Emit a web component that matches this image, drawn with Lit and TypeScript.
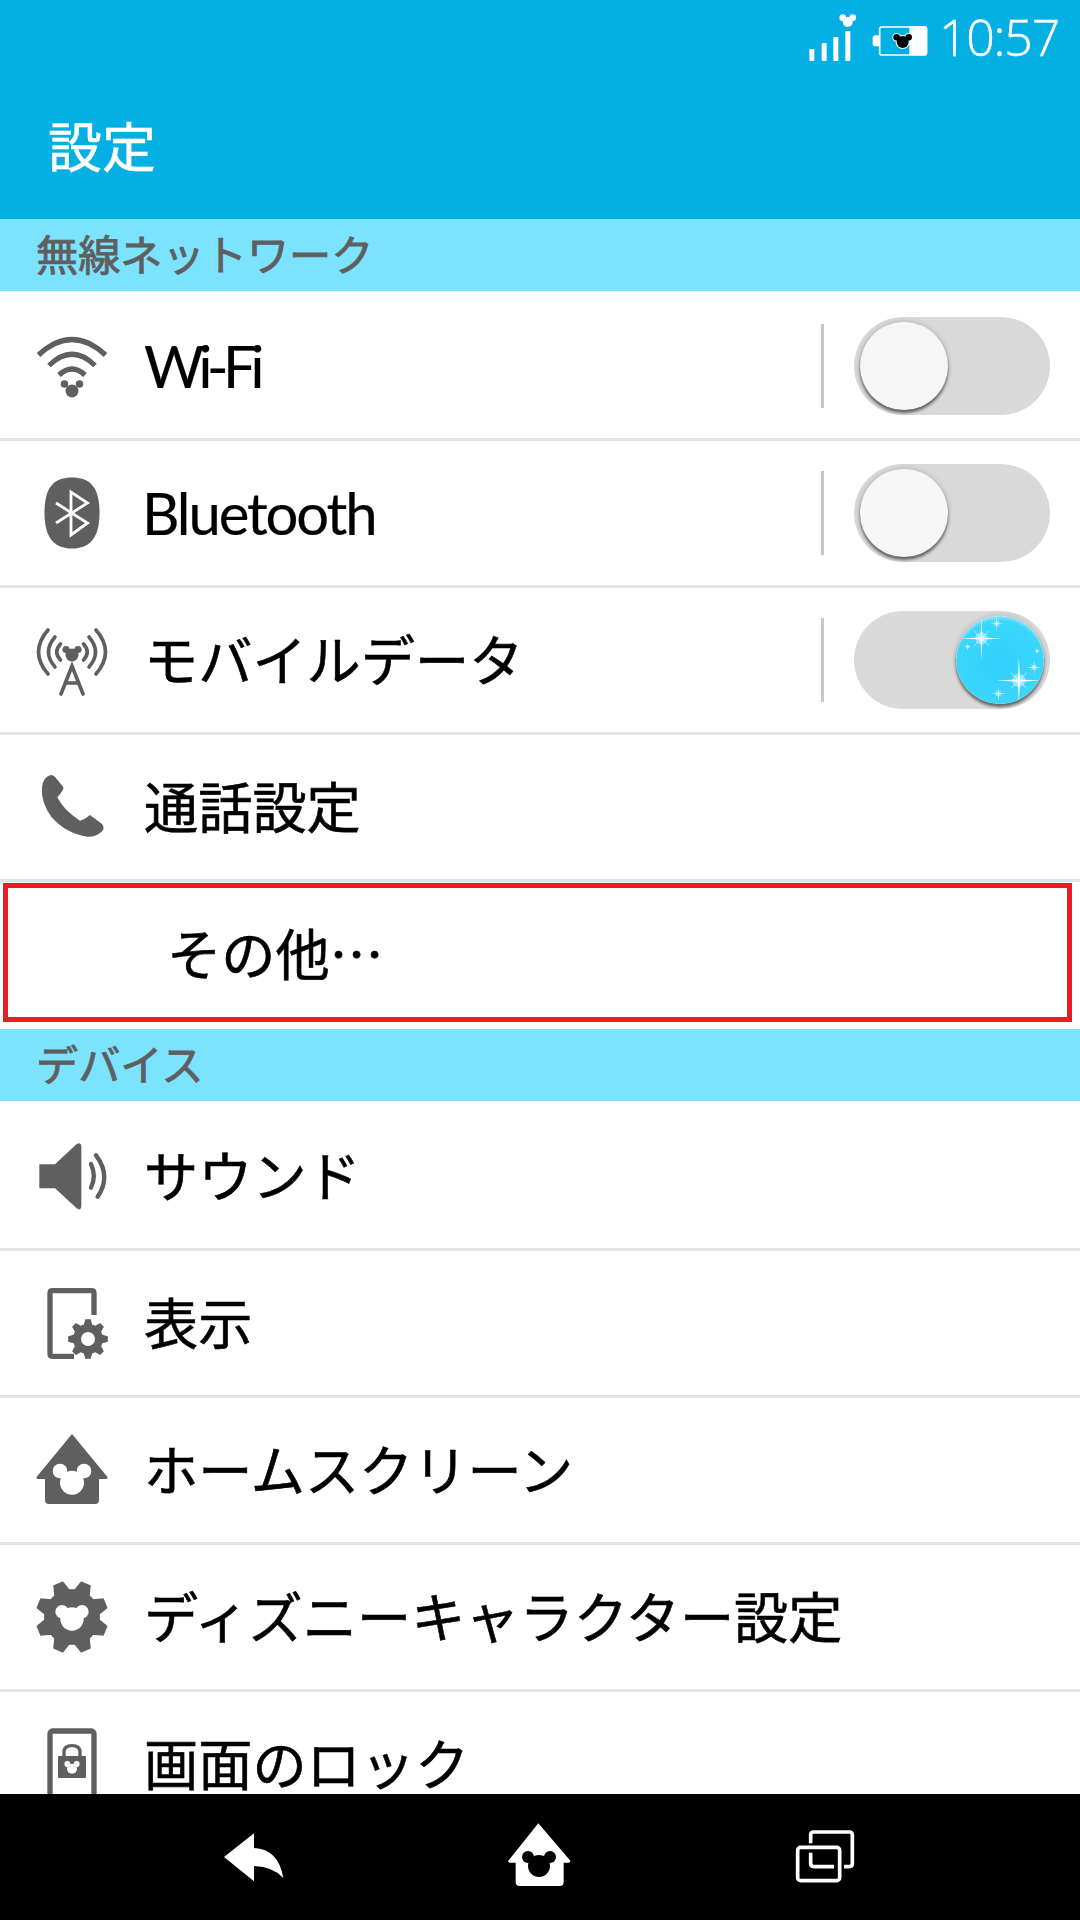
import { LitElement, html, css, svg } from "lit";
import { customElement } from "lit/decorators.js";

const GREY = "#5f5f5f";

function mickey(cx: number, cy: number, r: number, er: number, ex: number, ey: number, fill: string) {
  return svg`<circle cx=${cx} cy=${cy} r=${r} fill=${fill}/><circle cx=${cx - ex} cy=${cy - ey} r=${er} fill=${fill}/><circle cx=${cx + ex} cy=${cy - ey} r=${er} fill=${fill}/>`;
}

function gear(cx: number, cy: number, ro: number, ri: number, teeth: number, offset: number) {
  const step = (Math.PI * 2) / teeth;
  const pts: string[] = [];
  for (let i = 0; i < teeth; i++) {
    const a = offset + i * step - Math.PI / 2;
    const p = (rad: number, d: number) => `${(cx + rad * Math.cos(a + d)).toFixed(1)},${(cy + rad * Math.sin(a + d)).toFixed(1)}`;
    pts.push(p(ri, -step * 0.36), p(ro, -step * 0.17), p(ro, step * 0.17), p(ri, step * 0.36));
  }
  return pts.join(" ");
}

function star(x: number, y: number, arm: number) {
  const w = Math.max(1.4, arm * 0.05);
  const d = arm * 0.36;
  return svg`
    <circle cx=${x} cy=${y} r=${arm * 0.3} fill="#fff" opacity=".4"/>
    <polygon fill="#fff" points="${x - arm},${y} ${x - w},${y - w} ${x},${y - arm} ${x + w},${y - w} ${x + arm},${y} ${x + w},${y + w} ${x},${y + arm} ${x - w},${y + w}"/>
    <line x1=${x - d} y1=${y - d} x2=${x + d} y2=${y + d} stroke="#fff" stroke-width="1.8"/>
    <line x1=${x - d} y1=${y + d} x2=${x + d} y2=${y - d} stroke="#fff" stroke-width="1.8"/>`;
}

const wrap = (vb: string, body: unknown) => html`<svg class="icon" viewBox=${vb}>${body}</svg>`;

const icons: Record<string, unknown> = {
  wifi: wrap("0 0 72 72", svg`
    <g fill="none" stroke=${GREY} stroke-width="5.2">
      <path d="M2.5 25 Q36 -6 69.5 25"/>
      <path d="M13 35.5 Q36 13 59 35.5"/>
      <path d="M23 45 Q36 33 49 45"/>
    </g>${mickey(36, 61, 6.5, 3.8, 7.5, 7, GREY)}`),
  bluetooth: wrap("0 0 72 72", svg`
    <path fill=${GREY} d="M36 0.5C54 0.5 63.5 10 63.5 35.5C63.5 61 54 71.5 36 71.5C18 71.5 8.5 61 8.5 35.5C8.5 10 18 0.5 36 0.5Z"/>
    <polyline fill="none" stroke="#fff" stroke-width="2.8" points="20,46 51.5,26 35,15 35,58 51.5,46 20,26"/>`),
  mobile: wrap("0 0 72 72", svg`
    <g fill="none" stroke=${GREY} stroke-width="3.6" stroke-linecap="round">
      <path d="M12 6Q-7 28 12 50"/><path d="M60 6Q79 28 60 50"/>
      <path d="M19 13Q6 28 19 43"/><path d="M53 13Q66 28 53 43"/>
      <path d="M24.5 20Q17 28 24.5 36"/><path d="M47.5 20Q55 28 47.5 36"/>
      <path d="M25 70L36 42L47 70M29.5 59H42.5"/>
    </g>${mickey(36, 31, 6.5, 3.6, 6, 5.5, GREY)}`),
  phone: wrap("108 573 216 216", svg`
    <path fill=${GREY} d="M152 585Q160 585 166 592L190 622Q192 630 172 652Q192 692 240 722Q256 718 270 705L306 732Q316 745 305 755Q285 772 262 770Q200 762 155 712Q122 668 126 622Q130 590 152 585Z"/>`),
  sound: wrap("108 360 216 216", svg`
    <path fill=${GREY} d="M118 433H165L230 372Q243 365 244 378V558Q243 574 230 565L165 505H118Z"/>
    <g fill="none" stroke=${GREY} stroke-width="13" stroke-linecap="round">
      <path d="M273 432Q290 468 273 503"/><path d="M288 406Q335 468 293 530"/>
    </g>`),
  display: wrap("108 801 216 216", svg`
    <path fill="none" stroke=${GREY} stroke-width="16" d="M282 885V820Q282 812 274 812H158Q150 812 150 820V1001Q150 1009 158 1009H222"/>
    <polygon fill=${GREY} points=${gear(264, 957, 60, 45, 8, 0)}/>
    <circle cx="264" cy="957" r="21" fill="#fff"/>`),
  home: wrap("108 42 216 216", svg`
    <path fill=${GREY} d="M216 42L323 172Q323 177 318 177H297V240Q297 252 285 252H147Q135 252 135 240V177H114Q108 177 109 172Z"/>
    ${mickey(216, 188, 36, 22, 36, 35, "#fff")}`),
  gear: wrap("108 483 216 216", svg`
    <polygon fill=${GREY} stroke=${GREY} stroke-width="4" stroke-linejoin="round" points=${gear(216, 591, 108, 82, 8, Math.PI / 8)}/>
    ${mickey(216, 597, 35, 20, 30, 22, "#fff")}`),
  lock: wrap("108 924 216 216", svg`
    <rect x="150" y="933" width="132" height="260" rx="8" fill="none" stroke=${GREY} stroke-width="16"/>
    <path fill="none" stroke=${GREY} stroke-width="10" d="M192 1010V996Q192 977 216 977Q240 977 240 996V1010"/>
    <rect x="174" y="1008" width="84" height="66" rx="4" fill=${GREY}/>
    ${mickey(216, 1046, 15, 9, 14, 14, "#fff")}`),
};

type Row = { icon?: string; label: string; latin?: string; toggle?: "on" | "off"; highlight?: boolean };

const wireless: Row[] = [
  { icon: "wifi", label: "Wi-Fi", latin: "latin wifi", toggle: "off" },
  { icon: "bluetooth", label: "Bluetooth", latin: "latin bt", toggle: "off" },
  { icon: "mobile", label: "モバイルデータ", toggle: "on" },
  { icon: "phone", label: "通話設定" },
  { label: "その他…", highlight: true },
];
const device: Row[] = [
  { icon: "sound", label: "サウンド" },
  { icon: "display", label: "表示" },
  { icon: "home", label: "ホームスクリーン" },
  { icon: "gear", label: "ディズニーキャラクター設定" },
  { icon: "lock", label: "画面のロック" },
];

@customElement("app-root")
export class AppRoot extends LitElement {
  static styles = css`
    :host {
      display: block;
      width: 1080px;
      height: 1920px;
      font-family: "Noto Sans CJK JP", "Noto Sans", sans-serif;
      background: #fff;
      overflow: hidden;
    }
    .page { display: flex; flex-direction: column; height: 1920px; }
    .appbar { height: 219px; background: #04afe3; flex: none; display: flex; flex-direction: column; }
    .status { display: flex; justify-content: flex-end; align-items: flex-start; height: 90px; padding: 7px 21px 0 0; box-sizing: border-box; }
    .status svg { width: 124px; height: 50px; margin: 5px 9px 0 0; }
    .time { font-family: "Open Sans", sans-serif; font-weight: 300; font-size: 50px; line-height: 60px; letter-spacing: -1.2px; color: #fff; -webkit-text-stroke: 0.5px #fff; }
    .title { color: #fff; font-size: 54px; line-height: 60px; padding: 25px 0 0 48px; -webkit-text-stroke: 0.5px #fff; }
    .list { flex: 1; overflow: hidden; min-height: 0; }
    .section { height: 72px; background: #7ce3ff; color: #5f5f5f; font-size: 42.2px; line-height: 68px; padding-left: 36px; margin-bottom: 3px; -webkit-text-stroke: 0.9px #5f5f5f; }
    .row { position: relative; height: 144px; display: flex; align-items: center; padding-left: 36px; padding-right: 30px; border-bottom: 3px solid #e0e4e4; }
    .row.last { border-bottom-color: #fff; }
    .icon { width: 72px; height: 72px; flex: none; display: block; }
    .label { margin: 0 0 5px 36px; font-size: 54.2px; line-height: 56px; color: #000; flex: 1; white-space: nowrap; -webkit-text-stroke: 0.6px #000; }
    .label.latin { font-family: "Lato", sans-serif; font-size: 58px; -webkit-text-stroke: 0.2px #000; margin-bottom: 0; }
    .label.wifi { letter-spacing: -5.4px; }
    .label.bt { letter-spacing: -2.1px; margin-left: 34px; }
    .row.plain .label { margin-left: 131px; }
    .highlight { position: absolute; left: 3px; top: 1px; width: 1069px; height: 139px; box-sizing: border-box; border: 5px solid #ed1c24; pointer-events: none; }
    .divider { width: 3px; height: 84px; background: #c4c8cc; margin-right: 30px; flex: none; }
    .track { width: 196px; height: 98px; border-radius: 49px; background: #d9d9d9; display: flex; align-items: center; padding: 0 6px; box-sizing: border-box; flex: none; }
    .track.on { justify-content: flex-end; }
    .thumb { width: 88px; height: 88px; border-radius: 50%; background: #f6f6f6; box-shadow: 0 0 5px 1px rgba(0, 0, 0, 0.14), 0 3px 3px rgba(0, 0, 0, 0.5); }
    .thumb svg { display: block; width: 88px; height: 88px; border-radius: 50%; }
    .nav { height: 126px; background: #000; flex: none; display: flex; justify-content: center; gap: 195px; padding-top: 16px; box-sizing: border-box; }
    .nav svg { width: 90px; height: 90px; display: block; }
  `;

  private renderRow(r: Row, last: boolean) {
    return html`<div class="row ${r.icon ? "" : "plain"} ${last ? "last" : ""}">
      ${r.icon ? icons[r.icon] : ""}
      <div class="label ${r.latin ?? ""}">${r.label}</div>
      ${r.toggle
        ? html`<div class="divider"></div>
            <div class="track ${r.toggle}">
              <div class="thumb">
                ${r.toggle === "on"
                  ? html`<svg viewBox="527 977 266 266">
                      <defs>
                        <radialGradient id="sky" cx="50%" cy="55%" r="55%">
                          <stop offset="0%" stop-color="#30d0fb" />
                          <stop offset="90%" stop-color="#3cd6fc" />
                          <stop offset="100%" stop-color="#8ae8fd" />
                        </radialGradient>
                      </defs>
                      <circle cx="660" cy="1110" r="133" fill="url(#sky)" />
                      ${star(604, 1045, 62)} ${star(717, 1172, 68)} ${star(650, 1000, 22)} ${star(763, 1132, 22)}
                      ${star(655, 1212, 22)} ${star(562, 1070, 11)} ${star(772, 1083, 10)}
                    </svg>`
                  : ""}
              </div>
            </div>`
        : ""}
      ${r.highlight ? html`<div class="highlight"></div>` : ""}
    </div>`;
  }

  render() {
    return html`<div class="page">
      <div class="appbar">
        <div class="status">
          <svg viewBox="260 30 372 150">
            <g fill="#fff">
              <rect x="270" y="141" width="15" height="36" rx="2" />
              <rect x="307" y="123" width="15" height="54" rx="2" />
              <rect x="342" y="105" width="15" height="72" rx="2" />
              <rect x="378" y="87" width="15" height="90" rx="2" />
              <circle cx="385" cy="60" r="15" />
              <circle cx="370" cy="47" r="10" />
              <circle cx="400" cy="47" r="10" />
              <rect x="460" y="100" width="22" height="33" rx="8" />
              <rect x="570" y="73" width="54" height="87" rx="6" />
            </g>
            <rect x="481" y="75" width="140" height="84" rx="6" fill="none" stroke="#fff" stroke-width="5" />
            ${mickey(550, 120, 21, 13, 18, 14, "#fff")} ${mickey(550, 120, 18, 10, 18, 14, "#000")}
          </svg>
          <div class="time">10:57</div>
        </div>
        <div class="title">設定</div>
      </div>
      <div class="list">
        <div class="section">無線ネットワーク</div>
        ${wireless.map((r, i) => this.renderRow(r, i === wireless.length - 1))}
        <div class="section">デバイス</div>
        ${device.map((r) => this.renderRow(r, false))}
      </div>
      <div class="nav">
        <svg viewBox="0 0 270 270">
          <path fill="#fff" d="M42 141L132 70V114Q206 118 220 204Q190 170 132 168V214Z" />
        </svg>
        <svg viewBox="0 0 270 270">
          <path fill="#fff" d="M130 40L226 152Q226 158 220 158H206V215Q206 228 194 228H74Q62 228 62 215V158H44Q38 158 40 152Z" />
          ${mickey(132, 168, 33, 18, 33, 27, "#000")}
        </svg>
        <svg viewBox="0 0 270 270" fill="none" stroke="#fff" stroke-width="11">
          <path d="M92 100V75Q92 66 101 66H208Q217 66 217 75V160Q217 170 208 170H192" />
          <path d="M92 128V160Q92 170 102 170H162" />
          <rect x="53" y="112" width="126" height="100" rx="9" />
        </svg>
      </div>
    </div>`;
  }
}
